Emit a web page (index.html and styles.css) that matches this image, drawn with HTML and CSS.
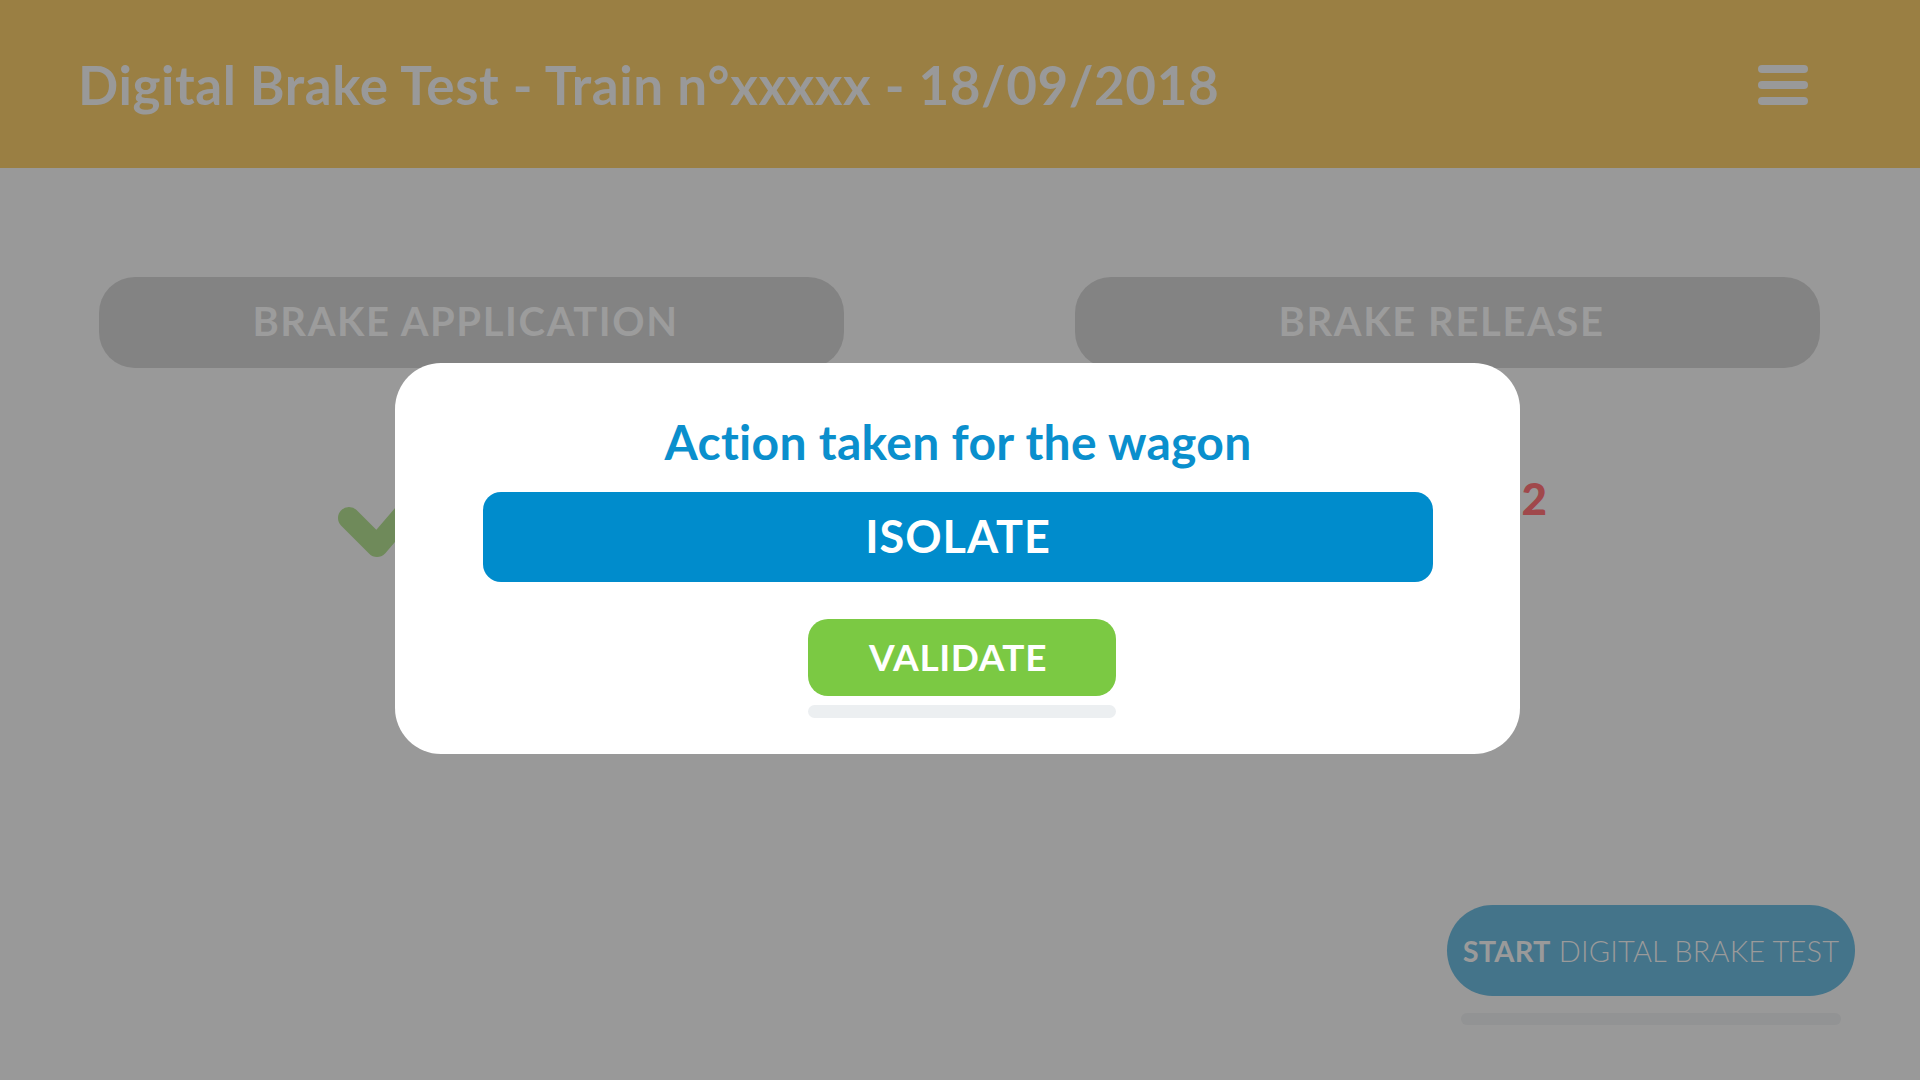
FILE: index.html
```html
<!DOCTYPE html>
<html lang="en">
<head>
<meta charset="utf-8">
<title>Digital Brake Test</title>
<link rel="stylesheet" href="styles.css">
</head>
<body>
<header class="topbar">
  <h1 class="title">Digital Brake Test - Train n°xxxxx - 18/09/2018</h1>
  <div class="burger"><span></span><span></span><span></span></div>
</header>
<main class="page">
  <div class="tabs">
    <div class="tab">BRAKE APPLICATION</div>
    <div class="tab">BRAKE RELEASE</div>
  </div>
  <div class="status">
    <div class="status-col status-left">
      <svg class="check" width="120" height="100" viewBox="0 0 120 100"><polyline points="12,12 40,40 100,-30" fill="none" stroke="#6f8a5a" stroke-width="22" stroke-linecap="round" stroke-linejoin="round"/></svg>
    </div>
    <div class="status-col status-right">
      <span class="count">WAGONS 22</span>
    </div>
  </div>
  <div class="actions">
    <div class="start-wrap">
      <div class="start"><b>START</b> DIGITAL BRAKE TEST</div>
      <div class="start-bar"></div>
    </div>
  </div>
</main>
<div class="overlay">
  <div class="modal">
    <h2 class="modal-title">Action taken for the wagon</h2>
    <div class="isolate">ISOLATE</div>
    <div class="validate">VALIDATE</div>
    <div class="validate-bar"></div>
  </div>
</div>
</body>
</html>
```
FILE: styles.css
```css
* { box-sizing: border-box; }
html, body { margin: 0; padding: 0; }
body {
  width: 1920px;
  height: 1080px;
  overflow: hidden;
  background: #999999;
  font-family: Lato, "Open Sans", sans-serif;
}
.topbar {
  height: 168px;
  background: #9a7f43;
  display: flex;
  align-items: center;
  justify-content: space-between;
  padding: 0 112px 0 78px;
}
.title {
  margin: 0;
  color: #999999;
  font-size: 53px;
  font-weight: 700;
  line-height: 1;
  letter-spacing: 0.55px;
}
.burger {
  display: flex;
  flex-direction: column;
  gap: 8px;
  padding-top: 2px;
}
.burger span {
  display: block;
  width: 50px;
  height: 8px;
  border-radius: 4px;
  background: #999999;
}
.page {
  padding: 109px 100px 0 99px;
}
.tabs {
  display: flex;
  justify-content: space-between;
}
.tab {
  width: 745px;
  height: 91px;
  border-radius: 36px;
  background: #838383;
  color: #9c9c9c;
  font-size: 40px;
  font-weight: 700;
  letter-spacing: 1.6px;
  display: flex;
  align-items: center;
  justify-content: center;
  padding: 0 12px 4px 0;
}
.status {
  display: flex;
  justify-content: space-between;
  height: 330px;
}
.status-col { width: 745px; }
.status-left { padding: 138px 0 0 238px; }
.check { display: block; }
.status-right {
  text-align: right;
  padding: 104px 273px 0 0;
}
.count {
  color: #a0484b;
  font-size: 44px;
  font-weight: 900;
}
.actions {
  display: flex;
  justify-content: flex-end;
  margin-right: -35px;
  padding-top: 207px;
}
.start-wrap {
  width: 408px;
  display: flex;
  flex-direction: column;
  align-items: center;
  gap: 17px;
}
.start {
  width: 408px;
  height: 91px;
  border-radius: 46px;
  background: #44748a;
  color: #9a9a9a;
  font-size: 29px;
  font-weight: 300;
  display: flex;
  align-items: center;
  justify-content: center;
  white-space: pre;
  letter-spacing: 0.2px;
}
.start b { font-weight: 700; }
.start-bar {
  width: 380px;
  height: 12px;
  border-radius: 6px;
  background: #929394;
}
.overlay {
  position: fixed;
  inset: 0;
  display: flex;
  justify-content: center;
  align-items: flex-start;
  padding: 363px 5px 0 0;
}
.modal {
  width: 1125px;
  height: 391px;
  background: #ffffff;
  border-radius: 46px;
  padding: 55px 87px 0 88px;
  display: flex;
  flex-direction: column;
  align-items: center;
}
.modal-title {
  margin: 0;
  color: #0a8fcd;
  font-size: 48px;
  font-weight: 700;
  line-height: 1;
  letter-spacing: 0.3px;
}
.isolate {
  margin-top: 26px;
  width: 100%;
  height: 90px;
  border-radius: 18px;
  background: #008ccc;
  color: #ffffff;
  font-size: 45px;
  font-weight: 700;
  display: flex;
  align-items: center;
  justify-content: center;
  letter-spacing: 1px;
  padding-bottom: 2px;
}
.validate {
  margin: 37px 0 0 8px;
  width: 308px;
  height: 77px;
  border-radius: 20px;
  background: #7bc943;
  color: #ffffff;
  font-size: 37px;
  font-weight: 700;
  display: flex;
  align-items: center;
  justify-content: center;
  letter-spacing: 0.6px;
  padding: 0 8px 3px 0;
}
.validate-bar {
  margin: 9px 0 0 8px;
  width: 308px;
  height: 13px;
  border-radius: 7px;
  background: #eceff1;
}
```
